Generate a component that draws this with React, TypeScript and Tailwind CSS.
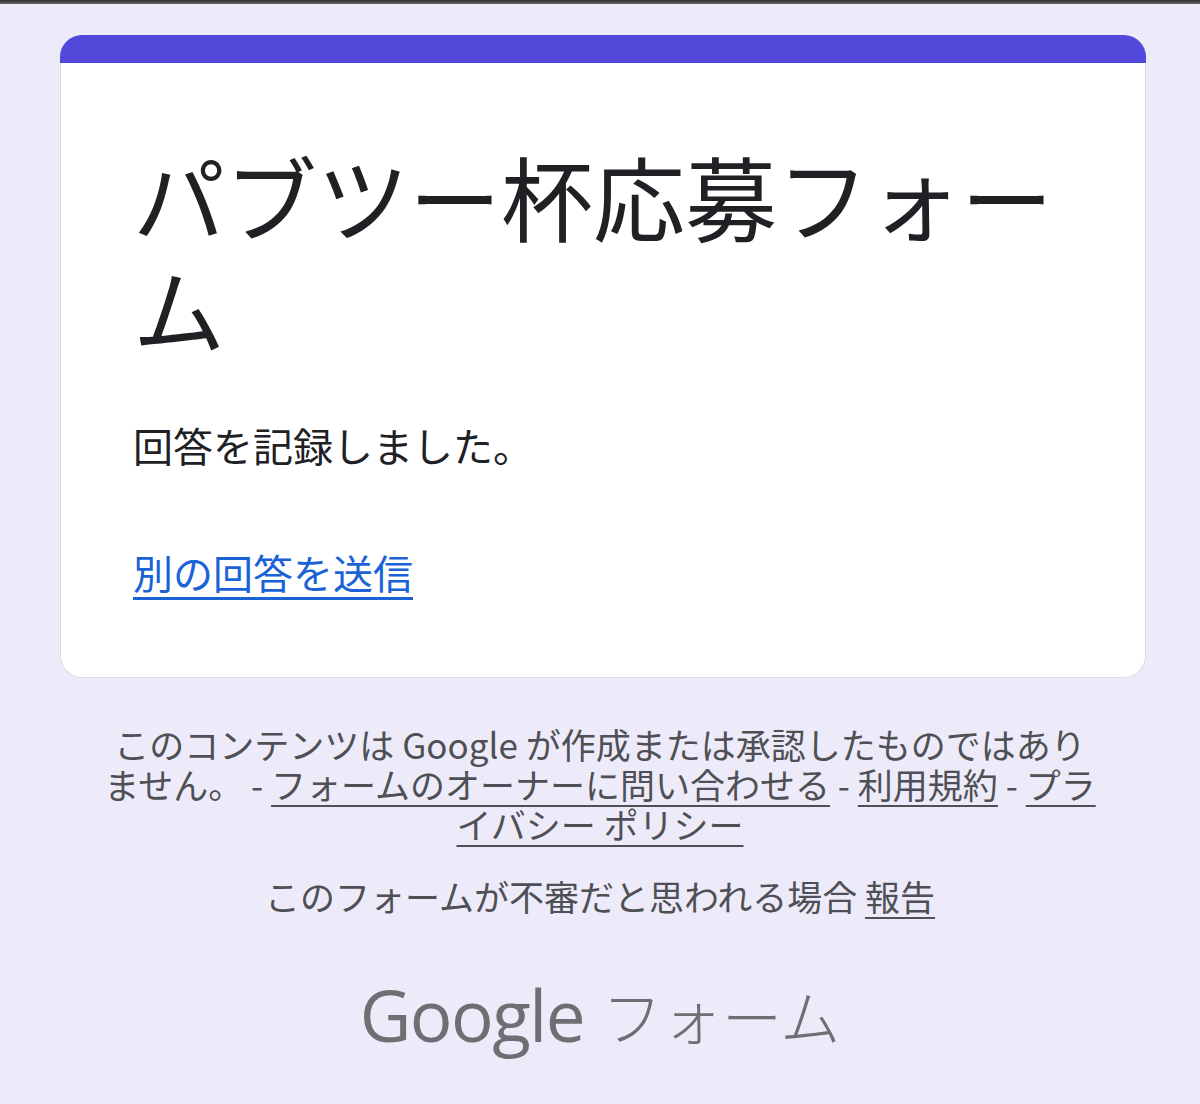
import React from "react";

export default function App() {
  const jp = { fontFamily: '"Noto Sans CJK JP", "Noto Sans", sans-serif' };
  return (
    <div className="min-h-[1104px] w-[1200px] bg-[#edebf9] flex flex-col" style={jp}>
      <div className="h-[4px] bg-gradient-to-b from-[#2e2e2e] to-[#6a6a6a]" />
      <div className="mt-[31px] ml-[60px] mr-[54px] flex flex-col">
        <div className="h-[28px] bg-[#5249db] rounded-t-[22px]" />
        <div className="bg-white border border-t-0 border-[#dcdbe2] rounded-b-[22px] pl-[72px] pr-[60px] pt-[76px] pb-[77px]">
          <h1 className="text-[92px] leading-[112px] text-[#202124] font-normal">
            パブツー杯応募フォーム
          </h1>
          <p className="mt-[54px] text-[40px] leading-[56px] text-[#202124]">回答を記録しました。</p>
          <a href="#" className="mt-[71px] block text-[40px] leading-[56px] text-[#1a62d6] underline decoration-[3px] underline-offset-[8px] w-fit">
            別の回答を送信
          </a>
        </div>
      </div>
      <div className="mt-[46px] px-[40px] text-center text-[35px] leading-[40px] text-[#4f5055]">
        このコンテンツは Google が作成または承認したものではあり
        <br />
        ません。 - <a href="#" className="underline decoration-2 underline-offset-[6px]">フォームのオーナーに問い合わせる</a> - <a href="#" className="underline decoration-2 underline-offset-[6px]">利用規約</a> - <a href="#" className="underline decoration-2 underline-offset-[6px]">プラ<br />イバシー ポリシー</a>
      </div>
      <div className="mt-[32px] text-center text-[35px] leading-[40px] text-[#4f5055]">
        このフォームが不審だと思われる場合 <a href="#" className="underline decoration-2 underline-offset-[6px]">報告</a>
      </div>
      <div className="mt-[54px] flex items-center justify-center gap-[18px] text-[#6e6e73]">
        <span className="text-[71px] leading-[90px] font-medium tracking-[-1.5px]" style={{ fontFamily: '"Open Sans", Lato, sans-serif' }}>Google</span>
        <span className="text-[60px] leading-[90px] tracking-[0px] font-light">フォーム</span>
      </div>
    </div>
  );
}
